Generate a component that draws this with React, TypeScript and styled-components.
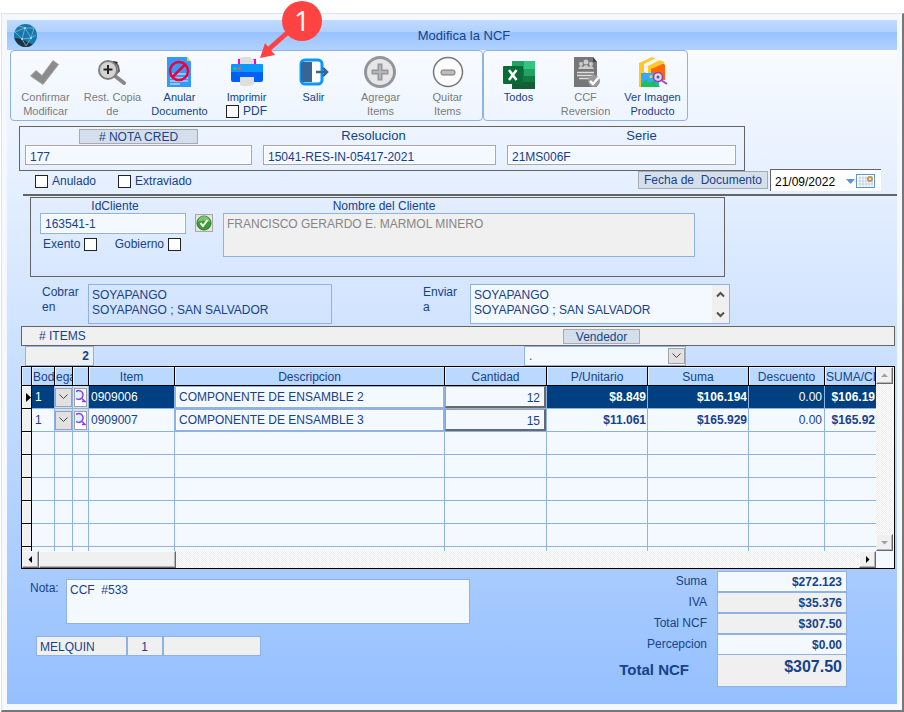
import React from 'react';
import styled, { createGlobalStyle, css } from 'styled-components';

const INK = '#15428b';
const LINE = '#8db2e3';
const DARK = '#646464';
const FIELD = '#f4f8ff';
const GREY = '#f0f0f0';

const GlobalStyle = createGlobalStyle`
  * { box-sizing: border-box; }
  body { margin: 0; background: #fff; color: ${INK}; font: 12px/15px "Liberation Sans", Arial, sans-serif; }
  button, input, textarea, select { font: inherit; color: inherit; margin: 0; border-radius: 0; outline: none; }
  button { padding: 0; cursor: pointer; }
`;

const Page = styled.div`
  min-height: 100vh;
  padding: 13px 0 0 1px;
  display: flex;
`;

const Window = styled.main`
  flex: 1;
  min-width: 0;
  display: flex;
  flex-direction: column;
  padding: 6px 5px;
  background: #f5f9ff;
  border: solid;
  border-width: 1px 2px 2px 1px;
  border-color: #e3e3e3 #777 #777 #e3e3e3;
`;

const TitleBar = styled.header`
  height: 30px;
  display: grid;
  grid-template-columns: 38px 1fr 14px;
  align-items: center;
  background: linear-gradient(#bfdbff 0, #b0d0ff 12px, #98c2ff 12px, #b0d1ff 100%);
  svg { display: block; margin-left: 6px; }
`;

const Title = styled.h1`
  margin: 0;
  font-size: 13px;
  font-weight: 400;
  text-align: center;
`;

const Body = styled.div`
  flex: 1;
  background: linear-gradient(#f8fbff, #d9e8ff 33%, #94bfff);
`;

const Toolbar = styled.div`
  display: flex;
  margin-left: 3px;
`;

const ToolGroup = styled.div<{ $count: number }>`
  display: grid;
  grid-template-columns: repeat(${p => p.$count}, 67px);
  padding: 0 1px;
  height: 71px;
  border: 1px solid ${LINE};
  border-radius: 4px;
`;

const Tool = styled.div`
  position: relative;
  display: flex;
  flex-direction: column;
  align-items: center;
`;

const ToolButton = styled.button`
  display: flex;
  flex-direction: column;
  align-items: center;
  padding: 5px 0 0;
  border: 0;
  background: none;
  font-size: 11px;
  line-height: 14px;
  white-space: pre-line;
  &:disabled { color: #7b7b7b; cursor: default; }
  svg { display: block; margin-bottom: 1px; }
`;

const Callout = styled.svg`
  position: absolute;
  left: 0;
  top: -51px;
  z-index: 2;
  pointer-events: none;
`;

const Check = styled.label<{ $after?: boolean }>`
  display: inline-flex;
  align-items: center;
  flex-direction: ${p => (p.$after ? 'row-reverse' : 'row')};
  gap: 4px;
  input {
    appearance: none;
    width: 13px;
    height: 13px;
    border: 1px solid #222;
    background: #fff;
  }
  input:checked { background: ${INK}; }
`;

const Tag = styled.span`
  display: inline-block;
  height: 15px;
  line-height: 14px;
  border: 1px solid #a7abb0;
  background: #d5dfec;
  text-align: center;
`;

const DocBox = styled.section`
  margin: 5px 152px 0 12px;
  padding: 2px 8px 5px 5px;
  border: 1px solid ${DARK};
  display: grid;
  grid-template-columns: 227fr 233fr 229fr;
  column-gap: 11px;
`;

const DocField = styled.label`
  display: grid;
  grid-template-rows: 16px 20px;
  justify-items: center;
  font-size: 13px;
  ${Tag} { width: 119px; font-size: 12px; }
`;

const DocLabel = styled.span<{ $before?: number; $after?: number }>`
  line-height: 14px;
  padding-left: ${p => p.$before ?? 0}px;
  padding-right: ${p => p.$after ?? 0}px;
`;

const TextField = styled.input`
  width: 100%;
  height: 20px;
  min-width: 0;
  padding: 3px 4px 0;
  border: 1px solid #a7a7a7;
  background: ${FIELD};
  font-size: 12px;
  box-shadow: inset 0 0 0 1px #fff;
`;

const StatusRow = styled.div`
  display: flex;
  align-items: center;
  height: 23px;
  padding: 0 16px 2px 28px;
  gap: 22px;
`;

const DateGroup = styled.div`
  margin: -2px 0 0 auto;
  align-self: flex-start;
  display: flex;
  align-items: center;
  gap: 2px;
  ${Tag} { width: 130px; height: 18px; line-height: 17px; white-space: pre; }
`;

const DateBox = styled.div`
  display: flex;
  align-items: center;
  width: 111px;
  height: 22px;
  border: solid;
  border-width: 1px 0 0 1px;
  border-color: #646464;
  background: #fff;
  input { width: 74px; height: 20px; border: 0; padding: 2px 0 0 4px; background: none; color: #000; }
  button { border: 0; background: none; height: 16px; }
  svg { display: block; }
`;

const Divider = styled.hr`
  margin: 0 0 0 16px;
  border: 0;
  height: 2px;
  background: ${DARK};
`;

const ClientBox = styled.section`
  margin: 1px 172px 0 23px;
  height: 80px;
  padding: 1px 29px 0 9px;
  border: 1px solid ${DARK};
  display: grid;
  grid-template-columns: 146px 19px 1fr;
  grid-template-rows: 14px 44px;
  column-gap: 9px;
`;

const Caption = styled.label<{ $column: number; $pad?: number }>`
  grid-column: ${p => p.$column};
  grid-row: 1;
  text-align: center;
  padding-right: ${p => p.$pad ?? 0}px;
  padding-left: ${p => (p.$pad ? 0 : 4)}px;
`;

const ClientId = styled.div`
  grid-column: 1;
  grid-row: 2;
  display: flex;
  flex-direction: column;
  gap: 3px;
  ${TextField} { height: 21px; border-color: ${LINE}; padding-top: 1px; flex: none; }
`;

const ClientFlags = styled.div`
  display: flex;
  justify-content: space-between;
  padding: 0 5px 0 3px;
`;

const OkButton = styled.button`
  grid-column: 2;
  grid-row: 2;
  width: 18px;
  height: 18px;
  margin-top: 1px;
  display: grid;
  place-items: center;
  border: 1px solid #a7a7a7;
  background: #e4e4e4;
`;

const Area = styled.textarea<{ $height: number; $tone?: string }>`
  display: block;
  width: 100%;
  height: ${p => p.$height}px;
  padding: 3px 3px 0;
  border: 1px solid ${LINE};
  background: ${p => p.$tone ?? FIELD};
  resize: none;
  overflow: hidden;
  line-height: 15px;
`;

const ClientName = styled(Area)`
  grid-column: 3;
  grid-row: 2;
  color: #868686;
`;

const AddressRow = styled.section`
  display: grid;
  grid-template-columns: 46px 244fr 91px 47px 260fr;
  padding: 7px 167px 0 35px;
  > label { padding-top: 1px; }
`;

const ScrollArea = styled.div`
  display: flex;
  height: 40px;
  border: 1px solid ${LINE};
  ${Area} { border: 0; padding-left: 3px; }
`;

const Arrows = styled.div`
  display: flex;
  flex-direction: column;
  justify-content: space-between;
  flex: none;
  width: 17px;
  background: ${GREY};
  button { border: 0; background: none; height: 18px; display: grid; place-items: center; }
`;

const ItemsBar = styled.div`
  display: grid;
  grid-template-columns: 1fr 77px 254px;
  align-items: center;
  height: 20px;
  margin: 2px 2px 0 14px;
  padding: 0 0 0 17px;
  border: 1px solid ${DARK};
  background: ${GREY};
`;

const ItemsSub = styled.div`
  display: flex;
  justify-content: space-between;
  padding: 0 211px 0 18px;
`;

const Readout = styled.output<{ $width: number; $align?: string }>`
  display: block;
  width: ${p => p.$width}px;
  height: 20px;
  padding: 2px 4px;
  border: 1px solid ${LINE};
  background: ${GREY};
  text-align: ${p => p.$align ?? 'left'};
`;

const Combo = styled.div<{ $width?: number }>`
  position: relative;
  ${p => p.$width && css`width: ${p.$width}px;`}
  select {
    display: block;
    appearance: none;
    width: 100%;
    height: 20px;
    padding: 0 4px;
    border: 1px solid ${LINE};
    background: ${FIELD};
  }
`;

const ArrowBox = styled.span`
  position: absolute;
  right: 1px;
  top: 2px;
  width: 17px;
  height: 16px;
  display: grid;
  place-items: center;
  border: 1px solid #a0a0a0;
  background: #e1e1e1;
  pointer-events: none;
`;

const GridFrame = styled.section`
  display: grid;
  grid-template-columns: minmax(0, 1fr) 18px;
  grid-template-rows: 184px 17px;
  margin: 0 2px 0 14px;
  border: 1px solid #000;
  background: ${FIELD};
`;

const TableClip = styled.div`
  overflow: hidden;
`;

const Table = styled.table`
  width: 100%;
  table-layout: fixed;
  border-collapse: separate;
  border-spacing: 0;
  th, td { overflow: hidden; white-space: nowrap; padding: 0; }
  thead th {
    height: 19px;
    border-right: 1px solid #000;
    border-bottom: 1px solid #000;
    background: #bbd8ff;
    box-shadow: inset 1px 1px #e6f1ff;
    font-size: 12px;
    font-weight: 400;
    padding-top: 2px;
  }
  tbody td {
    height: 23px;
    border-right: 1px solid ${LINE};
    border-bottom: 1px solid ${LINE};
  }
  tbody th {
    border-right: 1px solid #000;
    border-bottom: 1px solid #000;
    background: ${GREY};
    box-shadow: inset 1px 1px #fff;
  }
  tbody td:last-child { border-right: 0; }
  tbody th svg { display: block; margin-left: 3px; }
`;

const HeadLeft = styled.th`
  text-align: left;
  && { padding-left: 1px; }
`;

const ItemRow = styled.tr<{ $active: boolean }>`
  ${p => p.$active && css`td { background: #004080; color: #fff; }`}
`;

const CellInput = styled.input<{ $kind: 'code' | 'item' | 'text' | 'qty' | 'money' | 'plain' }>`
  display: block;
  width: 100%;
  height: 22px;
  padding: 0 2px;
  border: 0;
  background: none;
  ${p => p.$kind === 'item' && css`font-size: 12px;`}
  ${p => p.$kind === 'code' && css`padding-left: 3px;`}
  ${p => p.$kind === 'text' && css`
    padding: 0 3px; color: ${INK}; background: ${FIELD};
    border: 1px solid ${LINE}; box-shadow: inset 0 0 0 1px #fff;
  `}
  ${p => p.$kind === 'qty' && css`
    padding: 2px 4px 0; color: ${INK}; background: ${FIELD}; text-align: right;
    border: 1px solid #a0a0a0; border-right: 2px solid #696969; border-bottom: 2px solid #696969;
  `}
  ${p => (p.$kind === 'money' || p.$kind === 'plain') && css`text-align: right;`}
  ${p => p.$kind === 'money' && css`font-weight: 700; padding-right: 1px;`}
`;

const MiniButton = styled.button<{ $find?: boolean }>`
  display: grid;
  place-items: center;
  width: ${p => (p.$find ? 13 : 17)}px;
  height: 19px;
  margin: 0 auto;
  border: 1px solid #a0a0a0;
  background: ${p => (p.$find ? '#fff' : '#e1e1e1')};
`;

const ButtonCell = styled.td`
  && { background: #cfe0fa; }
`;

const Track = styled.div<{ $vertical?: boolean }>`
  display: flex;
  flex-direction: ${p => (p.$vertical ? 'column' : 'row')};
  justify-content: space-between;
  width: ${p => (p.$vertical ? '17px' : 'auto')};
  background: repeating-conic-gradient(#fff 0 25%, #ececec 0 50%) 0 0 / 2px 2px;
`;

const Bevel = styled.button`
  display: grid;
  place-items: center;
  width: 17px;
  height: 17px;
  flex: none;
  border: 1px solid;
  border-color: #f8f8f8 #696969 #696969 #f8f8f8;
  background: ${GREY};
  box-shadow: inset -1px -1px #b4b4b4;
`;

const Thumb = styled(Bevel)`
  width: 137px;
  margin-right: auto;
`;

const Bottom = styled.section`
  display: flex;
  justify-content: space-between;
  align-items: flex-start;
  padding: 2px 50px 16px 23px;
`;

const NoteColumn = styled.div`
  flex: 0 1 440px;
  min-width: 0;
  display: grid;
  gap: 12px;
  padding-top: 8px;
`;

const NoteLine = styled.div`
  display: grid;
  grid-template-columns: 36px 1fr;
  label { padding-top: 2px; }
`;

const UserLine = styled.div`
  display: flex;
  padding-left: 6px;
  ${Readout} { padding-top: 3px; padding-left: 3px; }
`;

const Totals = styled.dl`
  margin: 0;
  display: grid;
  grid-template-columns: 97px 130px;
  column-gap: 0;
`;

const TotalName = styled.dt<{ $big?: boolean }>`
  padding: 3px 10px 0 0;
  text-align: right;
  white-space: nowrap;
  ${p => p.$big && css`padding: 7px 28px 0 0; font-size: 15px; font-weight: 700; justify-self: end;`}
`;

const TotalValue = styled.dd<{ $grey?: boolean; $big?: boolean }>`
  margin: 0;
  height: ${p => (p.$big ? 32 : 21)}px;
  padding: 3px 4px 0;
  border: 1px solid ${LINE};
  border-top-width: ${p => (p.$big ? 0 : 1)}px;
  background: ${p => (p.$grey || p.$big ? GREY : FIELD)};
  text-align: right;
  font-weight: 700;
  ${p => p.$big && css`font-size: 16px; line-height: 18px;`}
`;

const Chevron = () => (
  <svg width="9" height="6" viewBox="0 0 9 6" fill="none" stroke="#444"><path d="M.5.5l4 4 4-4" /></svg>
);

const BoldChevron = ({ up = false }) => (
  <svg width="9" height="7" viewBox="0 0 9 7" fill="none" stroke="#505050" strokeWidth="2">
    <path d={up ? 'M1 5.5l3.5-3.5L8 5.5' : 'M1 1.500l3.500 3.500L8 1.500'} />
  </svg>
);

const Triangle = ({ d, fill = '#000' }: { d: string; fill?: string }) => (
  <svg width="9" height="9" viewBox="0 0 9 9" fill={fill}><path d={d} /></svg>
);

const Lens = () => (
  <svg width="11" height="16" viewBox="0 0 11 16" fill="none">
    <circle cx="4" cy="6" r="4.500" fill="#d5f6ff" />
    <path d="M1 2.500C5 0 8.500 3 8 6.500S4 11.500 1 9.500" stroke="#8a3cf0" strokeWidth="1.500" />
    <path d="M7 9.500l3 3H7" stroke="#8a3cf0" strokeWidth="1.500" />
  </svg>
);

const GlobeIcon = () => (
  <svg width="25" height="25" viewBox="0 0 25 25">
    <circle cx="12.500" cy="12.500" r="11.500" fill="#1678aa" />
    <path d="M1.500 15l7 1 11 5.500C13 27 4 23 1.500 15z" fill="#20313f" />
    <path d="M6 3l6 2 9 0M12 5L9 16 2 9l10-4 6 10-9 1M21 5l-3 10 5-3M18 15l-5 8-4-7" fill="none" stroke="#7dbbd8" strokeWidth=".8" />
    <g fill="#b8deec"><circle cx="12" cy="5" r="1" /><circle cx="9" cy="16" r="1" /><circle cx="18" cy="15" r="1" /></g>
  </svg>
);

const icons = {
  confirm: <path d="M1.500 20l5.500-5.500 6 5L24 4.500l5.500 4L14 28.500z" fill="#8b8b8b" stroke="#a4a4a4" />,
  copy: (
    <g fill="none">
      <path d="M15 6l5 1 2 3 1 5-3 3" stroke="#666" strokeWidth="2" />
      <path d="M17 5l5 1-3 4z" fill="#333" />
      <path d="M19 20l9 7" stroke="#888" strokeWidth="4" strokeLinecap="round" />
      <circle cx="12" cy="14" r="9" fill="#d4d4d4" stroke="#808080" strokeWidth="2" />
      <path d="M12 9v9M7.500 13.500h9" stroke="#222" strokeWidth="2" />
    </g>
  ),
  cancel: (
    <g>
      <path d="M4 1h20l4 5v25H4z" fill="#3598ff" /><path d="M24 1v4h4z" fill="#ffcf24" />
      <path d="M9 18h15M7 22h18M7 25h18M7 28h10" stroke="#e9f4ff" />
      <circle cx="16" cy="15" r="9" fill="none" stroke="#f00032" strokeWidth="2.500" />
      <path d="M22 8.500L9.500 21" stroke="#f00032" strokeWidth="2.500" />
    </g>
  ),
  print: (
    <g>
      <path d="M7 3h18v6H7z" fill="#ff00d4" /><path d="M9 2l3-1h7l4 3v5H9z" fill="#dedede" />
      <path d="M0 9q0-1 1-1h30q1 0 1 1v8H0z" fill="#0998ff" /><path d="M0 16h32v8q0 2-2 2H2q-2 0-2-2z" fill="#0060f4" />
      <path d="M9 21h14v7l-3 2H11l-2-1z" fill="#dedede" />
      <circle cx="4" cy="12.500" r="1.500" fill="#20c79c" /><circle cx="8.500" cy="12.500" r="1.500" fill="#f25b4b" />
    </g>
  ),
  exit: (
    <g>
      <rect x="3" y="4" width="21" height="24" rx="4" fill="#fff" stroke="#0998ff" strokeWidth="3" />
      <path d="M3 8q0-2 2-2h9v20H5q-2 0-2-2z" fill="#386594" />
      <path d="M18 16h11M25 12l4 4-4 4" fill="none" stroke="#386594" strokeWidth="2.500" />
    </g>
  ),
  add: (
    <g fill="none">
      <circle cx="16" cy="16" r="14.500" fill="#e6e6e6" stroke="#949699" strokeWidth="3" />
      <path d="M16 7.500v17M7.500 16h17" stroke="#949699" strokeWidth="5" />
      <path d="M16 9v14M9 16h14" stroke="#b3b5b7" strokeWidth="2" />
    </g>
  ),
  remove: (
    <g>
      <circle cx="16" cy="16" r="14.500" fill="#fdfdfd" stroke="#777" strokeWidth="1.500" />
      <rect x="9" y="14" width="14" height="5" rx="2" fill="#bcbcbc" stroke="#777" />
    </g>
  ),
  excel: (
    <g>
      <path d="M9 5h23v28H9z" fill="#107c41" /><path d="M9 5h12v8H9z" fill="#21a366" /><path d="M21 5h11v8H21z" fill="#33c481" />
      <path d="M21 13h11v7H21z" fill="#21a366" /><path d="M21 20h11v6H21z" fill="#107c41" /><path d="M9 26h23v7H9z" fill="#185c37" />
      <rect x="0" y="10" width="20" height="18" rx="1" fill="#0b6b36" />
      <path d="M6 14l7.500 10M13.500 14L6 24" stroke="#fff" strokeWidth="2.500" />
    </g>
  ),
  revert: (
    <g>
      <path d="M4 1h19l4 5v25H4z" fill="#777" /><path d="M23 1v5h4z" fill="#444" />
      <g fill="#ccc"><circle cx="11" cy="8" r="2" /><circle cx="16" cy="6" r="2.500" /><circle cx="21" cy="8" r="2" /><path d="M8 13q2-5 5-2 3-4 6 0 3-3 5 2z" /></g>
      <path d="M7 16.500h17M7 19.500h17M9 22.500h12" stroke="#ddd" strokeWidth="1.500" />
      <circle cx="24" cy="25" r="6" fill="#999" /><path d="M20 25l3 3 6-7" fill="none" stroke="#fff" strokeWidth="2.500" />
    </g>
  ),
  image: (
    <g>
      <path d="M3 7l13-6 12 5v5L8 17v14H3z" fill="#ffc928" />
      <path d="M8 8l12-6 4 2-12 6v6H8z" fill="#f4f4f4" />
      <path d="M13 12l13-5 3 2v15H13z" fill="#ff6500" /><path d="M12 11l14-6 3 2-14 6v5h-3z" fill="#ffc928" />
      <path d="M5 17h18v14H5z" fill="#35a9ff" /><path d="M5 28l5-5 4 4 4-3 6 7H5z" fill="#20bd63" />
      <circle cx="15" cy="20.500" r="1.500" fill="#ffc928" />
      <circle cx="22" cy="21" r="4.500" fill="#e3d7ef" stroke="#963bb5" strokeWidth="1.500" /><circle cx="22" cy="21" r="1.500" fill="#386594" />
      <path d="M25 24l6 4" stroke="#a547d1" strokeWidth="2" />
    </g>
  ),
};

const Icon = ({ name }: { name: keyof typeof icons }) => (
  <svg width="32" height="33" viewBox="0 0 32 33">{icons[name]}</svg>
);

type ToolDef = { icon: keyof typeof icons; text: string; off?: boolean };
const mainTools: ToolDef[] = [
  { icon: 'confirm', text: 'Confirmar\nModificar', off: true },
  { icon: 'copy', text: 'Rest. Copia\nde', off: true },
  { icon: 'cancel', text: 'Anular\nDocumento' },
  { icon: 'print', text: 'Imprimir' },
  { icon: 'exit', text: 'Salir' },
  { icon: 'add', text: 'Agregar\nItems', off: true },
  { icon: 'remove', text: 'Quitar\nItems', off: true },
];
const extraTools: ToolDef[] = [
  { icon: 'excel', text: 'Todos' },
  { icon: 'revert', text: 'CCF\nReversion', off: true },
  { icon: 'image', text: 'Ver Imagen\nProducto' },
];

const ToolItem = ({ tool }: { tool: ToolDef }) => (
  <Tool>
    <ToolButton type="button" disabled={tool.off}><Icon name={tool.icon} />{tool.text}</ToolButton>
    {tool.icon === 'print' && (
      <>
        <Check><input type="checkbox" />PDF</Check>
        <Callout width="112" height="64" viewBox="0 0 112 64">
          <path d="M74 33L56 49" stroke="#ff4343" strokeWidth="5" />
          <path d="M47 58l5-15 10 12z" fill="#ff4343" />
          <circle cx="89" cy="21" r="20" fill="#ff4343" />
          <text x="89" y="31" textAnchor="middle" fontFamily="Open Sans, sans-serif" fontSize="28" fill="#fff">1</text>
        </Callout>
      </>
    )}
  </Tool>
);

const items = [
  { code: '0909006', name: 'COMPONENTE DE ENSAMBLE 2', qty: '12', unit: '$8.849', sum: '$106.194', part: '$106.19' },
  { code: '0909007', name: 'COMPONENTE DE ENSAMBLE 3', qty: '15', unit: '$11.061', sum: '$165.929', part: '$165.92' },
];

const Cell = ({ kind, value, label }: { kind: 'code' | 'item' | 'text' | 'qty' | 'money' | 'plain'; value: string; label: string }) => (
  <td><CellInput $kind={kind} defaultValue={value} aria-label={label} /></td>
);

const columnWidths = [10, 23, 18, 16, 86, 0, 102, 101, 101, 76, 51];

const ItemsTable = () => (
  <Table>
    <colgroup>{columnWidths.map((w, i) => <col key={i} width={w || undefined} />)}</colgroup>
    <thead>
      <tr>
        <th aria-label="Fila" />
        <HeadLeft>Bod</HeadLeft><HeadLeft>ega</HeadLeft><th aria-label="Buscar" />
        <th>Item</th><th>Descripcion</th><th>Cantidad</th><th>P/Unitario</th><th>Suma</th><th>Descuento</th>
        <HeadLeft>SUMA/CD</HeadLeft>
      </tr>
    </thead>
    <tbody>
      {items.map((it, i) => (
        <ItemRow key={it.code} $active={i === 0}>
          <th scope="row" aria-label={it.code}>{i === 0 && <Triangle d="M1 0v9l5-4.500z" />}</th>
          <Cell kind="code" value="1" label="Bodega" />
          <ButtonCell><MiniButton type="button" aria-label="Elegir bodega"><Chevron /></MiniButton></ButtonCell>
          <ButtonCell><MiniButton $find type="button" aria-label="Buscar item"><Lens /></MiniButton></ButtonCell>
          <Cell kind="item" value={it.code} label="Item" />
          <Cell kind="text" value={it.name} label="Descripcion" />
          <Cell kind="qty" value={it.qty} label="Cantidad" />
          <Cell kind="money" value={it.unit} label="P/Unitario" />
          <Cell kind="money" value={it.sum} label="Suma" />
          <Cell kind="plain" value="0.00" label="Descuento" />
          <Cell kind="money" value={it.part} label="SUMA/CD" />
        </ItemRow>
      ))}
      {[0, 1, 2, 3, 4, 5].map(r => (
        <tr key={r}><th />{columnWidths.slice(1).map((_, c) => <td key={c} />)}</tr>
      ))}
    </tbody>
  </Table>
);

export default function App() {
  return (
    <Page>
      <GlobalStyle />
      <Window>
        <TitleBar><GlobeIcon /><Title>Modifica la NCF</Title></TitleBar>
        <Body>
          <Toolbar>
            <ToolGroup $count={7}>{mainTools.map(t => <ToolItem key={t.icon} tool={t} />)}</ToolGroup>
            <ToolGroup $count={3}>{extraTools.map(t => <ToolItem key={t.icon} tool={t} />)}</ToolGroup>
          </Toolbar>

          <DocBox>
            <DocField><Tag># NOTA CRED</Tag><TextField defaultValue="177" /></DocField>
            <DocField><DocLabel $after={12}>Resolucion</DocLabel><TextField defaultValue="15041-RES-IN-05417-2021" /></DocField>
            <DocField><DocLabel $before={40}>Serie</DocLabel><TextField defaultValue="21MS006F" /></DocField>
          </DocBox>

          <StatusRow>
            <Check><input type="checkbox" />Anulado</Check>
            <Check><input type="checkbox" />Extraviado</Check>
            <DateGroup>
              <Tag as="label" htmlFor="fecha">{'Fecha de  Documento'}</Tag>
              <DateBox>
                <input id="fecha" defaultValue="21/09/2022" />
                <button type="button" aria-label="Abrir calendario">
                  <svg width="30" height="16" viewBox="0 0 30 16">
                    <path d="M1 6h9l-4.500 5z" fill="#5c94d8" />
                    <rect x="11.500" y="1.500" width="18" height="13" fill="#fff" stroke="#5c94d8" />
                    <path d="M13 5h15M13 8h15M13 11h15M15 3v11M18 3v11M21 3v11M24 3v11M27 3v11" stroke="#c4cfe4" />
                    <circle cx="25" cy="6" r="2" fill="#fff" stroke="#b99b52" strokeWidth="2" />
                  </svg>
                </button>
              </DateBox>
            </DateGroup>
          </StatusRow>
          <Divider />

          <ClientBox>
            <Caption $column={1} htmlFor="cliente">IdCliente</Caption>
            <Caption $column={3} $pad={150} htmlFor="nombre">Nombre del Cliente</Caption>
            <ClientId>
              <TextField id="cliente" defaultValue="163541-1" />
              <ClientFlags>
                <Check $after><input type="checkbox" />Exento</Check>
                <Check $after><input type="checkbox" />Gobierno</Check>
              </ClientFlags>
            </ClientId>
            <OkButton type="button" aria-label="Validar cliente">
              <svg width="16" height="16" viewBox="0 0 16 16">
                <circle cx="8" cy="8" r="7" fill="#3c9c32" stroke="#287a24" />
                <path d="M2 7a6 6 0 0112 0q-6-3-12 0z" fill="#7cc46e" />
                <path d="M4.500 8l2.500 3 4.500-6" fill="none" stroke="#fff" strokeWidth="2" />
              </svg>
            </OkButton>
            <ClientName id="nombre" $height={44} $tone={GREY} readOnly defaultValue="FRANCISCO GERARDO E. MARMOL MINERO" />
          </ClientBox>

          <AddressRow>
            <label htmlFor="cobrar">Cobrar<br />en</label>
            <Area id="cobrar" $height={40} $tone="transparent" defaultValue={'SOYAPANGO\nSOYAPANGO ; SAN SALVADOR'} />
            <span />
            <label htmlFor="enviar">Enviar<br />a</label>
            <ScrollArea>
              <Area id="enviar" $height={38} defaultValue={'SOYAPANGO\nSOYAPANGO ; SAN SALVADOR'} />
              <Arrows>
                <button type="button" aria-label="Subir"><BoldChevron up /></button>
                <button type="button" aria-label="Bajar"><BoldChevron /></button>
              </Arrows>
            </ScrollArea>
          </AddressRow>

          <ItemsBar>
            <span># ITEMS</span>
            <Tag as="label" htmlFor="vendedor">Vendedor</Tag>
          </ItemsBar>
          <ItemsSub>
            <Readout $width={69} $align="right"><b>2</b></Readout>
            <Combo $width={162}>
              <select id="vendedor"><option>.</option></select>
              <ArrowBox><Chevron /></ArrowBox>
            </Combo>
          </ItemsSub>

          <GridFrame>
            <TableClip><ItemsTable /></TableClip>
            <Track $vertical>
              <Bevel type="button" aria-label="Arriba"><Triangle d="M1 6h7L4.500 2.500z" fill="#a0a0a0" /></Bevel>
              <Bevel type="button" aria-label="Abajo"><Triangle d="M1 3h7L4.500 6.500z" fill="#a0a0a0" /></Bevel>
            </Track>
            <Track>
              <Bevel type="button" aria-label="Izquierda"><Triangle d="M6 1v7L2.500 4.500z" /></Bevel>
              <Thumb type="button" aria-label="Desplazar" />
              <Bevel type="button" aria-label="Derecha"><Triangle d="M3 1v7l3.500-3.500z" /></Bevel>
            </Track>
          </GridFrame>

          <Bottom>
            <NoteColumn>
              <NoteLine>
                <label htmlFor="nota">Nota:</label>
                <Area id="nota" $height={45} defaultValue="CCF  #533" />
              </NoteLine>
              <UserLine>
                <Readout $width={91}>MELQUIN</Readout>
                <Readout $width={36} $align="center">1</Readout>
                <Readout $width={98} />
              </UserLine>
            </NoteColumn>
            <Totals>
              <TotalName>Suma</TotalName><TotalValue>$272.123</TotalValue>
              <TotalName>IVA</TotalName><TotalValue $grey>$35.376</TotalValue>
              <TotalName>Total NCF</TotalName><TotalValue $grey>$307.50</TotalValue>
              <TotalName>Percepcion</TotalName><TotalValue>$0.00</TotalValue>
              <TotalName $big>Total NCF</TotalName><TotalValue $big>$307.50</TotalValue>
            </Totals>
          </Bottom>
        </Body>
      </Window>
    </Page>
  );
}
